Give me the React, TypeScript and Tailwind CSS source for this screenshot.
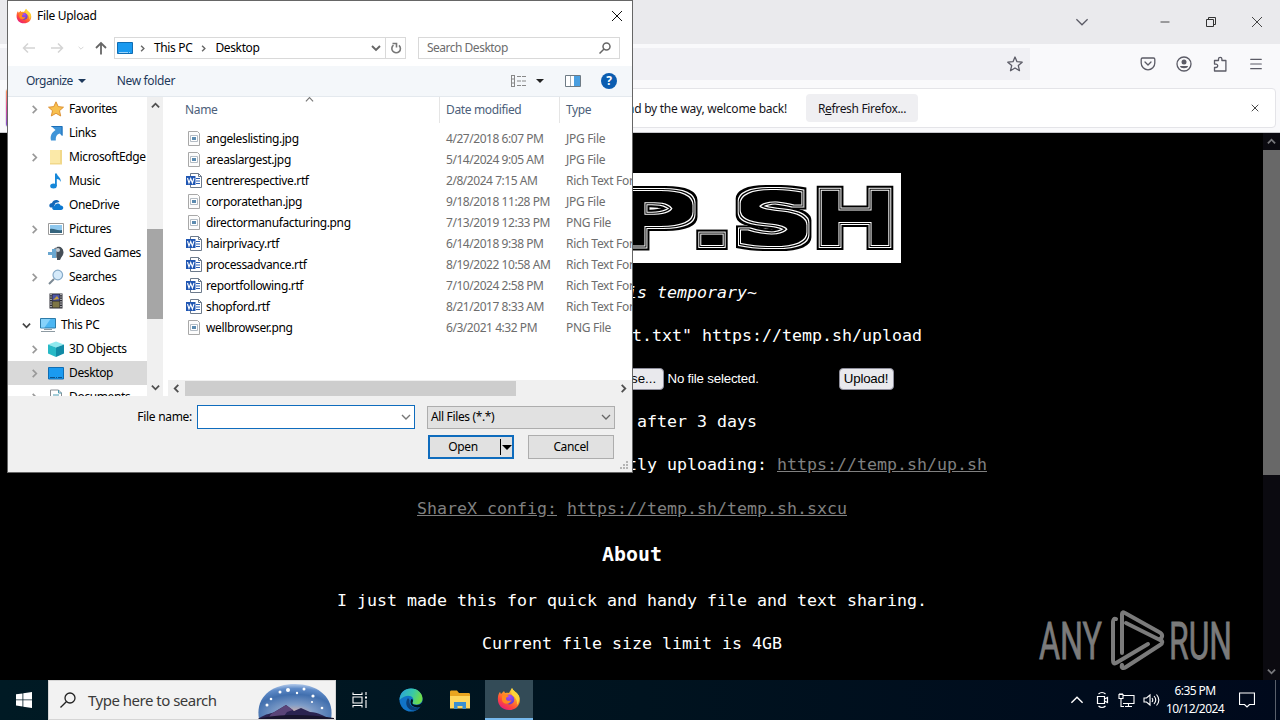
import { ReactNode } from 'react';
import { Menu, Minus, X } from 'lucide-react';

const treeItems = [
  { name: 'Favorites', icon: 'star', expand: true },
  { name: 'Links', icon: 'link', expand: false },
  { name: 'MicrosoftEdge', icon: 'folder', expand: true },
  { name: 'Music', icon: 'music', expand: false },
  { name: 'OneDrive', icon: 'cloud', expand: false },
  { name: 'Pictures', icon: 'picture', expand: true },
  { name: 'Saved Games', icon: 'games', expand: false },
  { name: 'Searches', icon: 'search', expand: true },
  { name: 'Videos', icon: 'video', expand: false },
  { name: 'This PC', icon: 'pc', expand: true, root: true },
  { name: '3D Objects', icon: 'cube', expand: true },
  { name: 'Desktop', icon: 'desktop', expand: true, selected: true },
  { name: 'Documents', icon: 'document', expand: true },
];

const files = [
  { name: 'angeleslisting.jpg', date: '4/27/2018 6:07 PM', type: 'JPG File' },
  { name: 'areaslargest.jpg', date: '5/14/2024 9:05 AM', type: 'JPG File' },
  { name: 'centrerespective.rtf', date: '2/8/2024 7:15 AM', type: 'Rich Text Format' },
  { name: 'corporatethan.jpg', date: '9/18/2018 11:28 PM', type: 'JPG File' },
  { name: 'directormanufacturing.png', date: '7/13/2019 12:33 PM', type: 'PNG File' },
  { name: 'hairprivacy.rtf', date: '6/14/2018 9:38 PM', type: 'Rich Text Format' },
  { name: 'processadvance.rtf', date: '8/19/2022 10:58 AM', type: 'Rich Text Format' },
  { name: 'reportfollowing.rtf', date: '7/10/2024 2:58 PM', type: 'Rich Text Format' },
  { name: 'shopford.rtf', date: '8/21/2017 8:33 AM', type: 'Rich Text Format' },
  { name: 'wellbrowser.png', date: '6/3/2021 4:32 PM', type: 'PNG File' },
];

const bannerLetters = [
  { char: 'T', x: 15, width: 61 },
  { char: 'E', x: 88, width: 76 },
  { char: 'M', x: 173, width: 80 },
  { char: 'P', x: 254, width: 78 },
  { char: 'S', x: 374, width: 74 },
  { char: 'H', x: 452, width: 82 },
];

type Direction = 'up' | 'down' | 'left' | 'right';

const chevronPaths: Record<Direction, string> = {
  up: 'M1 7 5 3l4 4',
  down: 'M1 3l4 4 4-4',
  left: 'M7 1 3 5l4 4',
  right: 'M3 1l4 4-4 4',
};

function Chevron({ dir, className = '', width = 1.6 }: { dir: Direction; className?: string; width?: number }) {
  return (
    <svg viewBox="0 0 10 10" className={`shrink-0 ${className}`} fill="none" stroke="currentColor" strokeWidth={width}>
      <path d={chevronPaths[dir]} />
    </svg>
  );
}

function FirefoxLogo({ className }: { className: string }) {
  return (
    <svg viewBox="0 0 24 24" className={className}>
      <defs>
        <linearGradient id="fox" x1="0.85" y1="0" x2="0.2" y2="1">
          <stop offset="0" stopColor="#fff44f" />
          <stop offset="0.35" stopColor="#ffa126" />
          <stop offset="0.7" stopColor="#ff4a3a" />
          <stop offset="1" stopColor="#e31587" />
        </linearGradient>
        <radialGradient id="foxGlobe" cx="0.5" cy="0.2" r="0.8">
          <stop offset="0" stopColor="#a84bf5" />
          <stop offset="1" stopColor="#5b3fd0" />
        </radialGradient>
      </defs>
      <path fill="url(#fox)" d="M15 1c1 3 5 4 7 8 3 7-2 14-10 14S0 17 1 10c.3-2.400 1-4 2-5l1 2 3-3 1 2c2-.5 3-.3 4 0 1-1.500 1.500-3 3-5z" />
      <circle cx="12.300" cy="12.500" r="5" fill="url(#foxGlobe)" />
      <path fill="#ff8a1f" d="M5 9c2-2 5-1 7 0-2 1-3 1.300-3 2.500 0 2.500 3 3 5.500 1.500C13 18 6 18 5 13z" />
      <path fill="#ffd43a" d="M15 1c1 3 5 4 7 8 .8 3-.3 7-2 9 .4-3-.5-6-2.500-8-2-1.700-4.500-3-2.500-9z" />
    </svg>
  );
}

function TreeIcon({ name }: { name: string }) {
  const shapes: Record<string, ReactNode> = {
    star: <path d="M8 .8 10.200 5.600l5.300.6-4 3.500 1.200 5.300L8 12.300 3.300 15l1.200-5.300-4-3.500 5.300-.6z" fill="#f8c04e" stroke="#d98b2b" strokeWidth=".9" />,
    link: (
      <>
        <path d="M3 1h11.500v10L11.500 8.500C8.500 9.500 7.500 12 7.800 15.500H3C1.800 10.500 4 7.500 7.500 5z" fill="#3f94d8" />
        <path d="M3.500 1.500h10.500v9" fill="none" stroke="#1c6fb8" />
      </>
    ),
    folder: (
      <>
        <path d="M2 1h11v14H2z" fill="#fbe9a8" />
        <path d="M12 1h2v14h-2zM2 14h12v1.500H2z" fill="#f1d88a" />
      </>
    ),
    music: (
      <>
        <path d="M7 .5h1.800c.5 3 4.500 4 4 8.500-.8-2-2.200-2.700-4-3V13H7z" fill="#1687d9" />
        <ellipse cx="5.500" cy="13" rx="3.300" ry="2.500" fill="#1687d9" />
      </>
    ),
    cloud: (
      <>
        <path d="M2.500 10.500C.3 9 1.500 6 4 6 5 2.500 10 2 11.500 5l-4 1-2 4.500z" fill="#1267b8" />
        <path d="M6 13c-2.600-.5-2.300-4 .5-4C7 6 11.500 5.500 12.500 8.500c3.500-.2 3.700 4.500.5 4.500z" fill="#0b78d0" />
      </>
    ),
    picture: (
      <>
        <path d="M.5 2.500h15v11H.5z" fill="#fff" stroke="#9a9a9a" />
        <path d="M2 4h12v8H2z" fill="#8fc8ee" />
        <path d="M2 8c4-1 7 2 12 1v3H2z" fill="#35647d" />
      </>
    ),
    games: (
      <>
        <circle cx="10" cy="7.500" r="5.500" fill="#77808a" />
        <path d="M9 2c4-1 7 2 6 7l-3 6H9z" fill="#454e57" />
        <path d="M0 7h4V4h4v9H4v-3H0z" fill="#6aa7d0" />
        <circle cx="10" cy="5" r="2" fill="#c4ccd3" />
      </>
    ),
    search: (
      <>
        <path d="m1 15 5-5" stroke="#7b8994" strokeWidth="2" />
        <circle cx="9.800" cy="6" r="4.800" fill="#d5eafa" stroke="#86aac8" strokeWidth="1.200" />
      </>
    ),
    video: (
      <>
        <path d="M1.500.5h13v15h-13z" fill="#2b2b33" />
        <path d="M4.500 1.500h7v6h-7z" fill="#4c55a8" />
        <path d="M4.500 8.500h7v6h-7z" fill="#7d7544" />
        <path d="m5 7 4-4 2 3z" fill="#c8a13c" />
        <path d="M3 1v14M13 1v14" stroke="#eee" strokeWidth="1.200" strokeDasharray="1.200 1.200" />
      </>
    ),
    pc: (
      <>
        <path d="M.5 1.500h15v9.500H.5z" fill="#4cb6f2" stroke="#2d7ba8" />
        <path d="M1 2h9.500l-6 8.500H1z" fill="#86d2fa" />
        <path d="M1 14.500h14M4 12.500h8" stroke="#8d9aa2" />
      </>
    ),
    cube: (
      <>
        <path d="m0 3.500 8-3 8 3-8 3z" fill="#8fe9ee" />
        <path d="m0 3.500 8 3V16l-8-3.500z" fill="#27b9c6" />
        <path d="m16 3.500-8 3V16l8-3.500z" fill="#118ba6" />
      </>
    ),
    desktop: (
      <>
        <path d="M.5 2.500h15v11.500H.5z" fill="#1a9af0" stroke="#0f6db3" />
        <path d="M2 12.500h12" stroke="#0a528c" strokeDasharray="5 1 1 1" />
      </>
    ),
    document: (
      <>
        <path d="M2.500 1h8l3 3v11.500h-11z" fill="#fff" stroke="#8a8f94" />
        <path d="M10.500 1v3h3M5 6h6M5 8h6" fill="none" stroke="#4a9ab0" />
      </>
    ),
  };
  return (
    <svg viewBox="0 0 16 16" className="h-4 w-4 shrink-0">
      {shapes[name]}
    </svg>
  );
}

function FileIcon({ word }: { word: boolean }) {
  return word ? (
    <svg viewBox="0 0 16 16" className="h-4 w-4 shrink-0">
      <path d="M4.500.5h8l3 3v11h-11z" fill="#fff" stroke="#6c7a8c" />
      <path d="M12.500.5v3h3" fill="none" stroke="#6c7a8c" />
      <path d="M10 5.500h4M10 8h4M10 10.500h4" stroke="#2b5fb4" />
      <path d="M0 3h9.500v9H0z" fill="#1f56b3" />
      <path d="m1.500 5 1.500 5 1.700-4.500L6.400 10 8 5" fill="none" stroke="#fff" strokeWidth="1.100" />
    </svg>
  ) : (
    <svg viewBox="0 0 16 16" className="h-4 w-4 shrink-0">
      <path d="M2.500.5h9l2 2v12h-11z" fill="#fcfcfc" stroke="#a8a8a8" />
      <path d="M4.500 4.500h7v6h-7z" fill="#fff" stroke="#b4bcc4" />
      <path d="M6 6h4v3H6z" fill="#5c8bb0" />
    </svg>
  );
}

function BrowserChrome() {
  return (
    <div className="h-[133px] shrink-0 border-b border-[#c8c8cc] bg-[#f9f9fb] text-[#5b5b66]">
      <div className="flex h-11 items-center justify-end bg-[#eaeaed] pr-[17px]">
        <Chevron dir="down" className="mr-[69px] h-3.5 w-3.5" width={0.9} />
        <Minus className="mr-[33px] h-3.5 w-3.5 text-[#333]" strokeWidth={1.5} />
        <svg viewBox="0 0 12 12" className="mr-[34px] h-3 w-3" fill="none" stroke="#333">
          <path d="M1.500 3.500h7v7h-7zM3.500 3.500v-2h7v7h-2" />
        </svg>
        <svg viewBox="0 0 12 12" className="h-3 w-3" fill="none" stroke="#333" strokeWidth="0.900">
          <path d="m1 1 10 10M11 1 1 11" />
        </svg>
      </div>
      <div className="flex h-11 items-start pt-1">
        <div className="flex h-8 w-[1030px] items-center justify-end bg-[#f0f0f4] pr-[7px]">
          <svg viewBox="0 0 16 16" className="h-4 w-4" fill="none" stroke="currentColor" strokeWidth="1.300" strokeLinejoin="round">
            <path d="m8 1 2 4.700 5.200.5-3.900 3.400 1.200 5.100L8 12l-4.500 2.700 1.200-5.100L.8 6.200 6 5.700z" />
          </svg>
        </div>
        <div className="ml-[110px] flex h-8 items-center gap-5">
          <svg viewBox="0 0 16 16" className="h-4 w-4" fill="none" stroke="currentColor" strokeWidth="1.300" strokeLinecap="round" strokeLinejoin="round">
            <path d="M2.500 2h11c.8 0 1.300.5 1.300 1.300V7a6.800 6.800 0 0 1-13.600 0V3.300C1.200 2.500 1.700 2 2.500 2zM5 6l3 3 3-3" />
          </svg>
          <svg viewBox="0 0 16 16" className="h-4 w-4" fill="none" stroke="currentColor" strokeWidth="1.300">
            <circle cx="8" cy="8" r="7" />
            <circle cx="8" cy="6" r="2.500" fill="currentColor" stroke="none" />
            <path d="M4 10h8c0 3-8 3-8 0z" fill="currentColor" stroke="none" />
          </svg>
          <svg viewBox="0 0 16 16" className="h-4 w-4" fill="none" stroke="currentColor" strokeWidth="1.300" strokeLinejoin="round">
            <path d="M2.500 4.500h4V3a1.700 1.700 0 0 1 3.400 0v1.500h4V15H2.500v-3.500H4a1.700 1.700 0 0 0 0-3.400H2.500z" />
          </svg>
          <Menu className="h-4 w-4" strokeWidth={1.700} />
        </div>
      </div>
      <div className="ml-[5px] mr-1 flex h-10 items-center overflow-hidden rounded border border-[#e4e4e8] bg-white font-['Noto_Sans','Open_Sans',sans-serif] text-[12px] text-[#15141a]">
        <div className="h-full w-1 shrink-0 bg-gradient-to-b from-[#ff9a44] via-[#e0489a] to-[#7b4bd0]"></div>
        <div className="flex w-[777px] shrink-0 justify-end overflow-hidden pt-px whitespace-nowrap tracking-[-0.25px]">
          Do you want to clean it up for a fresh, like-new experience? And by the way, welcome back!
        </div>
        <button className="ml-[19px] h-7 w-[112px] shrink-0 rounded bg-[#efeff2] pt-px tracking-[-0.33px]">
          R<span className="underline">e</span>fresh Firefox...
        </button>
        <X className="ml-auto mr-3.5 h-3 w-3 text-[#333]" strokeWidth={1.800} />
      </div>
    </div>
  );
}

// two concentric white rings inside a black shape grown out from the glyph
function RingFilter({ id, radius }: { id: string; radius: number }) {
  return (
    <filter id={id} x="0" y="0" width="539" height="90" filterUnits="userSpaceOnUse" colorInterpolationFilters="sRGB">
      <feFlood floodColor="#fff" result="white" />
      <feMorphology in="SourceGraphic" operator="dilate" radius={radius} result="outer" />
      <feMorphology in="SourceAlpha" operator="dilate" radius={radius - 2} result="wide" />
      <feComposite in="white" in2="wide" operator="in" result="ring1" />
      <feMorphology in="SourceGraphic" operator="dilate" radius={radius - 3} result="gap" />
      <feMorphology in="SourceAlpha" operator="dilate" radius={radius - 4} result="narrow" />
      <feComposite in="white" in2="narrow" operator="in" result="ring2" />
      <feMorphology in="SourceGraphic" operator="dilate" radius={radius - 5} result="core" />
      <feMerge>
        <feMergeNode in="outer" />
        <feMergeNode in="ring1" />
        <feMergeNode in="gap" />
        <feMergeNode in="ring2" />
        <feMergeNode in="core" />
      </feMerge>
    </filter>
  );
}

function Banner() {
  return (
    <svg viewBox="0 0 539 90" className="h-[90px] w-[539px]" fontFamily="DejaVu Sans, sans-serif">
      <defs>
        <RingFilter id="rings" radius={8} />
        <RingFilter id="dotRings" radius={6} />
      </defs>
      <path d="M0 0h539v90H0z" fill="#fff" />
      <g filter="url(#rings)" fontSize="66">
        {bannerLetters.map(letter => (
          <text key={letter.char} x={letter.x} y="69" textLength={letter.width} lengthAdjust="spacingAndGlyphs">
            {letter.char}
          </text>
        ))}
      </g>
      <text x="329" y="71" fontSize="44" fontWeight="700" textLength="42" lengthAdjust="spacingAndGlyphs" filter="url(#dotRings)">.</text>
    </svg>
  );
}

function Page() {
  return (
    <div className="flex min-h-0 flex-1 bg-black">
      <div className="flex flex-1 flex-col items-center overflow-hidden pt-10 font-['DejaVu_Sans_Mono',monospace] text-[16.61px] leading-5 whitespace-pre text-white">
        <Banner />
        <p className="mt-5 ml-px italic">~everything is temporary~</p>
        <p className="mt-[23px] ml-px">To upload: curl -F "file=@test.txt" https://temp.sh/upload</p>
        <form className="mt-[22px] flex h-[22px] w-[524px] items-center font-['Liberation_Sans',sans-serif] text-[13.300px]">
          <button className="ml-[224px] h-[22px] w-[70px] rounded border border-[#8f8f9d] bg-[#e9e9ed] text-black">Browse...</button>
          <span className="ml-1 w-[171px] tracking-[-0.2px]">No file selected.</span>
          <button className="h-[22px] w-[55px] shrink-0 rounded border border-[#8f8f9d] bg-[#e9e9ed] tracking-[-0.2px] text-black">Upload!</button>
        </form>
        <p className="mt-[22px] ml-px">Files expire after 3 days</p>
        <p className="mt-[23px] ml-px">
          Bash script for piping output directly uploading: <a className="text-[#808080] underline">https://temp.sh/up.sh</a>
        </p>
        <p className="mt-6 ml-px text-[#808080]">
          <a className="underline">ShareX config:</a> <a className="underline">https://temp.sh/temp.sh.sxcu</a>
        </p>
        <h2 className="mt-[26px] ml-px text-[19.900px] font-bold">About</h2>
        <p className="mt-[26px] ml-px">I just made this for quick and handy file and text sharing.</p>
        <p className="mt-[23px] ml-px">Current file size limit is 4GB</p>
      </div>
      <div className="flex w-[17px] flex-col items-center bg-[#0b0a10] text-[#77777b]">
        <Chevron dir="up" className="my-1 h-[9px] w-[9px]" width={2} />
        <div className="h-[325px] w-full bg-[#686868]"></div>
        <Chevron dir="down" className="mt-auto mb-1 h-[9px] w-[9px]" width={2} />
      </div>
    </div>
  );
}

function FileDialog() {
  return (
    <div className="absolute left-[7px] top-0 flex h-[473px] w-[626px] flex-col overflow-hidden border border-[#666] bg-white font-['Noto_Sans','Open_Sans',sans-serif] text-[12px] leading-4 tracking-[-0.36px] text-black">
      <div className="flex h-[30px] shrink-0 items-center pl-2 pr-[9px]">
        <FirefoxLogo className="h-4 w-4" />
        <span className="ml-[5px] tracking-[-0.3px]">File Upload</span>
        <svg viewBox="0 0 12 12" className="ml-auto h-3 w-3" fill="none" stroke="#111">
          <path d="m1 1 10 10M11 1 1 11" />
        </svg>
      </div>

      <div className="flex h-[35px] shrink-0 items-center pb-px pl-3.5">
        <svg viewBox="0 0 14 12" className="h-3 w-3.5" fill="none" stroke="#d4d4d4" strokeWidth="1.500">
          <path d="M13 6H1.500M6 1.500 1.500 6 6 10.500" />
        </svg>
        <svg viewBox="0 0 14 12" className="ml-3.5 h-3 w-3.5" fill="none" stroke="#d4d4d4" strokeWidth="1.500">
          <path d="M1 6h11.500M8 1.500 12.500 6 8 10.500" />
        </svg>
        <Chevron dir="down" className="ml-3.5 h-1.5 w-1.5 text-[#d4d4d4]" />
        <svg viewBox="0 0 12 14" className="ml-[11px] h-3.5 w-3" fill="none" stroke="#666" strokeWidth="1.800">
          <path d="M6 13.500V2M1 7l5-5 5 5" />
        </svg>
        <div className="ml-[7px] flex h-[22px] w-[292px] items-center border border-[#d9d9d9] pl-0.5">
          <svg viewBox="0 0 16 12" className="h-3 w-4">
            <path d="M.5.500h15v11H.5z" fill="#1a9af0" stroke="#0f6db3" />
            <path d="M2 10.500h12" stroke="#9cd4fa" strokeDasharray="9 1 1 1" />
          </svg>
          <Chevron dir="right" className="ml-1.5 h-[7px] w-[7px] text-[#666]" width={2} />
          <span className="ml-2">This PC</span>
          <Chevron dir="right" className="ml-2 h-[7px] w-[7px] text-[#666]" width={2} />
          <span className="ml-2">Desktop</span>
          <Chevron dir="down" className="ml-auto mr-1 h-2.5 w-2.5 text-[#666]" width={1.900} />
          <div className="flex h-full w-5 items-center justify-center border-l border-[#d9d9d9]">
            <svg viewBox="0 0 12 12" className="h-3 w-3" fill="none" stroke="#777" strokeWidth="1.600">
              <path d="M9 3.300A4.300 4.300 0 1 1 3.500 3.100M2.500 1.500h4v4" />
            </svg>
          </div>
        </div>
        <div className="ml-3 flex h-[22px] w-[202px] items-center justify-between border border-[#d9d9d9] pl-2 pr-2 tracking-[-0.5px] text-[#6d6d6d]">
          Search Desktop
          <svg viewBox="0 0 12 12" className="h-3 w-3" fill="none" stroke="#666" strokeWidth="1.500">
            <circle cx="7.500" cy="4.500" r="3.500" />
            <path d="m5 7-4.500 4.500" />
          </svg>
        </div>
      </div>

      <div className="flex h-[31px] shrink-0 items-center border-b border-[#e4e9ee] bg-[#f4f7fa] pb-px pl-[18px] pr-[15px] text-[#1e395b]">
        <span className="tracking-[-0.55px]">Organize</span>
        <svg viewBox="0 0 8 4" className="ml-[5px] h-1 w-2"><path d="M0 0h8L4 4z" fill="#1e395b" /></svg>
        <span className="ml-[31px]">New folder</span>
        <svg viewBox="0 0 18 14" className="ml-auto h-3.5 w-[18px]" fill="none" stroke="#888">
          <path d="M1.500 1v12M4.500 1v12M1 1.500h4M1 5h4M1 9h4M1 12.500h4M7 2.500h4M12 2.500h4M7 7h4M12 7h4M7 11.500h4M12 11.500h4" />
        </svg>
        <svg viewBox="0 0 8 4" className="ml-2 h-1 w-2"><path d="M0 0h8L4 4z" fill="#222" /></svg>
        <svg viewBox="0 0 16 12" className="ml-[21px] h-3 w-4">
          <path d="M.5.500h15v11H.5z" fill="#fff" stroke="#6e7b85" />
          <path d="M5.500 1v10" stroke="#a2adb5" />
          <path d="M9 1h6v10H9z" fill="#4a9fe0" />
        </svg>
        <div className="ml-5 flex h-4 w-4 items-center justify-center rounded-full bg-[#0c5db0] text-[12px] font-bold text-white">?</div>
      </div>

      <div className="flex h-[299px] shrink-0">
        <div className="w-[139px] shrink-0 overflow-hidden">
          {treeItems.map(item => (
            <div
              key={item.name}
              className={`flex h-6 items-center whitespace-nowrap ${item.root ? 'pl-3.5' : 'pl-[22px]'} ${item.selected ? 'bg-[#d9d9d9]' : ''}`}
            >
              <Chevron
                dir={item.root ? 'down' : 'right'}
                className={`h-[9px] w-[9px] ${item.root ? 'text-[#444]' : 'text-[#999]'} ${item.expand ? '' : 'invisible'}`}
                width={1.900}
              />
              <span className="ml-[9px] mr-[5px] flex">
                <TreeIcon name={item.icon} />
              </span>
              {item.name}
            </div>
          ))}
        </div>
        <div className="flex w-4 shrink-0 flex-col items-center bg-[#f0f0f0] text-[#505050]">
          <Chevron dir="up" className="mt-1 h-[9px] w-[9px]" width={2} />
          <div className="mt-[119px] h-[90px] w-full bg-[#a6a6a6]"></div>
          <Chevron dir="down" className="mt-auto mb-1 h-[9px] w-[9px]" width={2} />
        </div>
        <div className="ml-[5px] flex min-w-0 flex-1 flex-col">
          <div className="relative flex h-[26px] items-center text-[#4c607a]">
            <Chevron dir="up" className="absolute left-[137px] top-[-2px] h-[9px] w-[9px] text-[#777]" width={1.300} />
            <span className="w-[271px] pl-[17px]">Name</span>
            <span className="flex h-full w-[120px] items-center border-l border-[#e5e5e5] pl-1.5">Date modified</span>
            <span className="flex h-full items-center border-l border-[#e5e5e5] pl-1.5">Type</span>
          </div>
          <div className="flex-1 overflow-hidden pt-[5px]">
            {files.map(file => (
              <div key={file.name} className="flex h-[21px] items-center whitespace-nowrap text-[#6d6d6d]">
                <span className="ml-[18px] flex w-[260px] shrink-0 items-center gap-1 text-black">
                  <FileIcon word={file.name.endsWith('.rtf')} />
                  <span className="pt-px">{file.name}</span>
                </span>
                <span className="w-[120px] shrink-0 pt-px tracking-[-0.45px]">{file.date}</span>
                <span className="shrink-0 pt-px tracking-[-0.3px]">{file.type}</span>
              </div>
            ))}
          </div>
          <div className="flex h-4 items-center bg-[#f0f0f0] pl-1 pr-1 text-[#505050]">
            <Chevron dir="left" className="h-[9px] w-[9px]" width={2} />
            <div className="ml-1 h-[15px] w-[331px] bg-[#cdcdcd]"></div>
            <Chevron dir="right" className="ml-auto h-[9px] w-[9px]" width={2} />
          </div>
        </div>
      </div>

      <div className="relative flex-1 bg-[#f0f0f0] pt-[9px]">
        <div className="flex items-center">
          <span className="w-[184px] text-right tracking-[-0.3px]">File name:</span>
          <div className="ml-[5px] flex h-6 w-[218px] items-center justify-end border border-[#0f6cbd] bg-white pr-[3px]">
            <Chevron dir="down" className="h-2.5 w-2.5 text-[#777]" width={1.400} />
          </div>
          <div className="ml-3 flex h-[23px] w-[188px] items-center justify-between border border-[#adadad] bg-[#e1e1e1] pl-[3px] pr-[3px]">
            All Files (*.*)
            <Chevron dir="down" className="h-2.5 w-2.5 text-[#666]" width={1.300} />
          </div>
        </div>
        <div className="mt-1.5 flex pl-[420px]">
          <button className="flex h-6 w-[86px] items-center border-2 border-[#0f6cbd] bg-[#e1e1e1]">
            <span className="flex-1 pr-1 text-center">Open</span>
            <span className="flex h-4 w-3 items-center justify-center border-l border-black">
              <svg viewBox="0 0 10 5" className="h-[5px] w-2.5"><path d="M0 0h10L5 5z" /></svg>
            </span>
          </button>
          <button className="ml-3.5 h-6 w-[86px] border border-[#adadad] bg-[#e1e1e1]">Cancel</button>
        </div>
        <svg viewBox="0 0 9 9" className="absolute bottom-0.5 right-[3px] h-[9px] w-[9px]" fill="#b5b5b5">
          <path d="M6 0h2v2H6zM3 3h2v2H3zM6 3h2v2H6zM0 6h2v2H0zM3 6h2v2H3zM6 6h2v2H6z" />
        </svg>
      </div>
    </div>
  );
}

function Watermark() {
  return (
    <svg viewBox="0 0 210 72" className="absolute left-[1038px] top-[605px] h-[72px] w-[210px]">
      <g fill="#7b7b7b" stroke="#7b7b7b" strokeWidth="0.800" fontFamily="Roboto, sans-serif" fontSize="51.500">
        <text x="1" y="54" textLength="63" lengthAdjust="spacingAndGlyphs">ANY</text>
        <text x="131" y="54" textLength="63" lengthAdjust="spacingAndGlyphs">RUN</text>
      </g>
      <g fill="none" stroke="#7b7b7b" strokeWidth="4" strokeLinejoin="round" strokeLinecap="round">
        <path d="M84 48V9c0-2 1-2 3-1l34 19c4 2 4 5 1 7" />
        <path d="M78 14c-2-1-3 1-3 3v38c0 3 1 4 3 3l32-19" />
        <path d="M88 18l34 17c3 1 3 3 0 5L88 62c-3 2-5 1-4-2" />
      </g>
    </svg>
  );
}

function Taskbar() {
  return (
    <div className="flex h-10 shrink-0 items-center bg-gradient-to-r from-[#001a24] via-[#00131f] to-[#00091c] text-white">
      <div className="flex w-12 justify-center">
        <svg viewBox="0 0 16 16" className="h-4 w-4" fill="#fff">
          <path d="m0 2.300 6.500-.9v6.100H0zM7.300 1.300 16 0v7.500H7.300zM0 8.300h6.500v6.200L0 13.600zM7.300 8.300H16V16l-8.700-1.300z" />
        </svg>
      </div>
      <div className="flex h-full w-72 items-center border border-[#d5d5d5] bg-[#f2f2f2] pl-[11px] font-['Noto_Sans','Open_Sans',sans-serif] text-[15px] text-[#3a3a3a]">
        <svg viewBox="0 0 16 16" className="h-4 w-4" fill="none" stroke="#222" strokeWidth="1.300">
          <circle cx="10" cy="6" r="5" />
          <path d="M6.300 9.700.5 15.500" />
        </svg>
        <span className="ml-3 whitespace-nowrap tracking-[-0.5px]">Type here to search</span>
        <svg viewBox="0 0 76 38" className="ml-auto h-[38px] w-[78px]">
          <defs>
            <radialGradient id="sky" cx="0.5" cy="0.85" r="0.85">
              <stop offset="0" stopColor="#e4b7a8" />
              <stop offset="0.3" stopColor="#7f9dc8" />
              <stop offset="0.65" stopColor="#416fae" />
              <stop offset="0.85" stopColor="#5f8bc8" />
              <stop offset="1" stopColor="#b5cbea" />
            </radialGradient>
          </defs>
          <path d="M1 38C-3 16 14 3 37 3s40 14 36 35z" fill="url(#sky)" />
          <path d="M0 38c8-6 14-5 18-8l10-6 8 6 7-3 9 4c8 0 14 4 20 7z" fill="#2a2350" />
          <path d="M13 33 28 24l7 5-6 2-5 7H10z" fill="#5a4478" />
          <path d="M0 38c18-5 50-5 76-1v1z" fill="#17142c" />
          <g fill="#fff">
            <circle cx="22" cy="11" r="1.500" />
            <circle cx="30" cy="9" r="2" />
            <circle cx="39" cy="12" r="1.200" />
            <circle cx="46" cy="8" r="1.500" />
            <circle cx="55" cy="15" r="1.600" />
            <circle cx="13" cy="18" r="1.300" />
            <circle cx="9" cy="24" r="1.500" />
            <circle cx="54" cy="21" r="1.100" />
            <circle cx="64" cy="27" r="1.300" />
          </g>
        </svg>
      </div>
      <div className="flex w-12 justify-center">
        <svg viewBox="0 0 16 16" className="h-4 w-4" fill="none" stroke="#fff" strokeWidth="1.100">
          <path d="M1 .5v2h9v-2M1 5h9v6H1zM1 15.500v-2h9v2M14 0v3M14 8v8" />
          <path d="M13 4.500h2v2h-2z" fill="#fff" stroke="none" />
        </svg>
      </div>
      <div className="flex w-[53px] justify-center">
        <svg viewBox="0 0 24 24" className="h-6 w-6">
          <defs>
            <linearGradient id="edgeTop" x1="0" y1="0" x2="1" y2="0.300">
              <stop offset="0" stopColor="#2a9fe0" />
              <stop offset="0.6" stopColor="#38c8a8" />
              <stop offset="1" stopColor="#6ddc4c" />
            </linearGradient>
          </defs>
          <circle cx="12" cy="12" r="11.500" fill="#1174c8" />
          <path d="M.5 12C1 4 6 .5 12 .5c7 0 11.500 5 11.500 10 0 4-3 6-6.500 6-3 0-4-1-3.500-2C17 9 9 4 .5 12z" fill="url(#edgeTop)" />
          <path d="M9 10c-4 5-1 13 7 12.500 2-.3 4-1.500 5.500-3.500-6 2-12-1-11-7z" fill="#0b3f78" />
          <path d="M13.500 14.500c-.5 1.500 1 2.500 4 2.500 2.500 0 5-1 6-4 0 2-.8 4.500-2 6-5 1.500-10-1-10-5 0-1 .3-2 1-3 1.500 0 2 2 1 3.500z" fill="#00131f" />
        </svg>
      </div>
      <div className="flex w-12 justify-center pr-[3px]">
        <svg viewBox="0 0 22 20" className="h-5 w-[22px]">
          <path d="M1 2c0-1 .5-1.500 1.500-1.500H8l2 2.500h9.500c1 0 1.500.5 1.500 1.500V18H1z" fill="#e9a520" />
          <path d="M1 6h20v12.500H1z" fill="#ffd75e" />
          <path d="M5 19v-7h12v7h-3.500v-3h-5v3z" fill="#3a8fd0" />
        </svg>
      </div>
      <div className="flex h-full w-12 items-center justify-center border-b-2 border-[#76b9ed] bg-[#334b57]">
        <FirefoxLogo className="h-6 w-6" />
      </div>

      <div className="ml-auto flex h-full items-center font-['Noto_Sans','Open_Sans',sans-serif] text-[12px] leading-[18px]">
        <Chevron dir="up" className="h-3.5 w-3.5" width={1} />
        <svg viewBox="0 0 14 16" className="ml-3 h-4 w-3.5" fill="none" stroke="#fff" strokeWidth="1.200">
          <path d="M1.500 4.500h7v7h-7zM8.500 7l3-1.500v5l-3-1.500M2.500 2c2-1.800 5-1.800 7 0M2.500 14c2 1.800 5 1.800 7 0" />
        </svg>
        <svg viewBox="0 0 17 16" className="ml-2 h-4 w-[17px]" fill="none" stroke="#fff" strokeWidth="1.100">
          <path d="M5 3.500h11v8H5M10.500 11.500v3M7 14.500h7M1 2.500h4v4H1zM3 6.500v8h3M2 2.500V1M4 2.500V1" />
        </svg>
        <svg viewBox="0 0 17 16" className="ml-2 h-4 w-[17px]" fill="none" stroke="#fff" strokeWidth="1.100">
          <path d="M1 6h2.500L7 3v10l-3.500-3H1zM9 6c1 1.300 1 2.700 0 4M11 4c2.200 2.500 2.200 5.500 0 8M13.500 2.500c3 3.500 3 7.500 0 11" />
        </svg>
        <div className="ml-0.5 flex w-[66px] flex-col items-center whitespace-nowrap tracking-[-0.58px]">
          <span>6:35 PM</span>
          <span>10/12/2024</span>
        </div>
        <svg viewBox="0 0 16 16" className="ml-[11px] h-4 w-4" fill="none" stroke="#fff" strokeWidth="1.200">
          <path d="M.5 1h15v11.500H10.500L8 15l-2.500-2.500h-5z" />
        </svg>
        <div className="ml-5 mr-1 h-full border-l border-[#59606c]"></div>
      </div>
    </div>
  );
}

export default function App() {
  return (
    <div className="relative flex h-[720px] w-[1280px] flex-col overflow-hidden bg-black">
      <BrowserChrome />
      <Page />
      <Taskbar />
      <FileDialog />
      <Watermark />
    </div>
  );
}
